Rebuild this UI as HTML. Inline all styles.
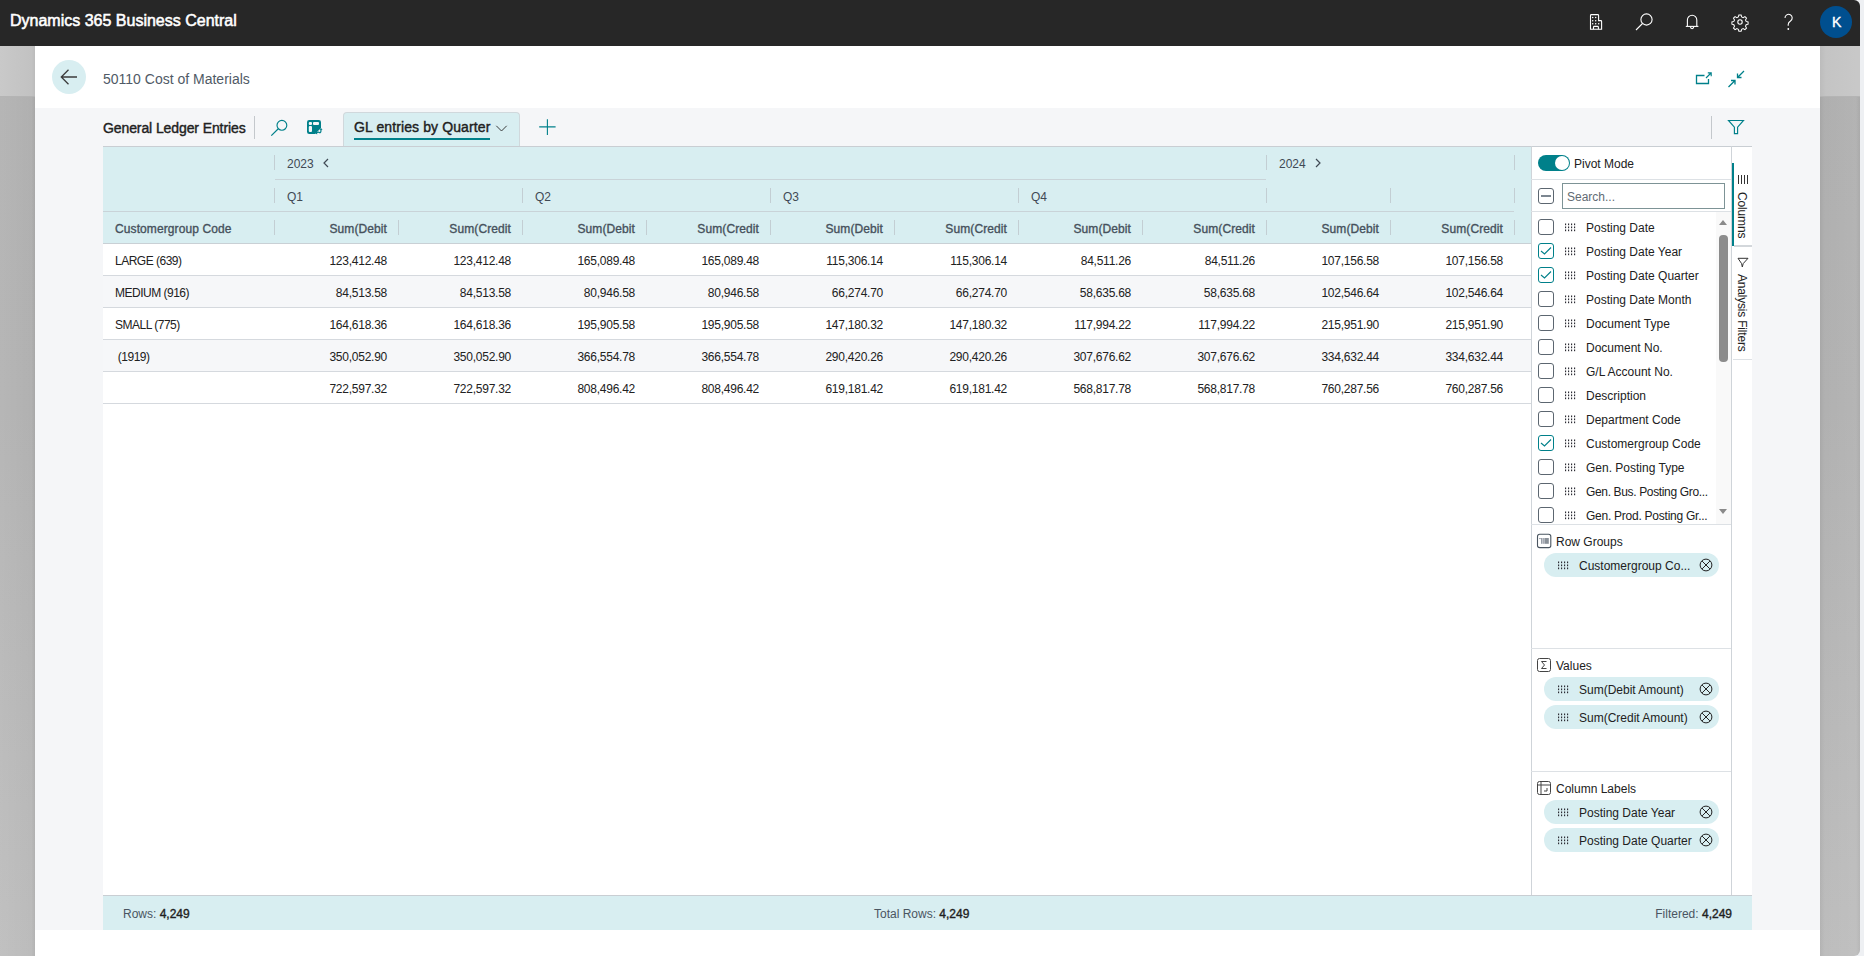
<!DOCTYPE html><html><head><meta charset='utf-8'><style>
*{box-sizing:border-box;margin:0;padding:0}
html,body{width:1864px;height:956px;overflow:hidden;background:#eef0f3;font-family:"Liberation Sans",sans-serif;color:#212121}
.a{position:absolute}
.nw{white-space:nowrap}
#top{left:0;top:0;width:1860px;height:46px;background:#272727;border-top-right-radius:6px}
#title{left:10px;top:12px;color:#fff;font-size:16px;-webkit-text-stroke:0.55px #fff;letter-spacing:0px;white-space:nowrap}
#lstrip{left:0;top:46px;width:35px;height:910px;background:linear-gradient(90deg,rgba(255,255,255,0.07),rgba(255,255,255,0) 90%,rgba(0,0,0,0.05)),linear-gradient(180deg,#b0b0b0,#b1b1b1 40%,#bcbcbc)}
#lstrip .t{position:absolute;left:0;top:0;width:35px;height:51px;background:linear-gradient(90deg,#c9c9c9,#c2c2c2 90%,#bbbbbb);border-bottom:1px solid #b4b4b4}
#rstrip{left:1820px;top:46px;width:40px;height:910px;background:linear-gradient(90deg,rgba(0,0,0,0.05),rgba(0,0,0,0) 12%,rgba(255,255,255,0.05) 90%,rgba(0,0,0,0.03)),linear-gradient(180deg,#afafaf,#b1b1b1 40%,#bdbdbd);border-bottom-right-radius:6px}
#rstrip .t{position:absolute;left:0;top:0;width:40px;height:51px;background:linear-gradient(90deg,#bcbcbc,#c4c4c4 15%,#c8c8c8 90%);border-bottom:1px solid #b4b4b4}
#page{left:35px;top:46px;width:1785px;height:910px;background:#fff}
#tb{left:35px;top:108px;width:1785px;height:822px;background:#f5f6f8}
.hd{font-size:12px;color:#46515c;-webkit-text-stroke:0.35px #46515c;letter-spacing:0.1px;white-space:nowrap}
.gt{font-size:12px;color:#3f4954;white-space:nowrap}
.cell{font-size:12px;color:#212121;white-space:nowrap;letter-spacing:-0.25px}
.lab{letter-spacing:-0.5px}
.bar{width:1px;height:15px;background:#c3ced3}
.hl{height:1px;background:#c9d3d8}
.rl{height:1px;background:#d5d9de}
.cb{width:16px;height:16px;border:1px solid #5c6670;border-radius:3px;background:#fff}
.cb.on{border-color:#00808a}
.pt{font-size:12px;color:#212121;white-space:nowrap}
.chip{height:24px;border-radius:12px;background:#d8eef1}
</style>
</head><body>
<div class='a' id='top'><div class='a' id='title'>Dynamics 365 Business Central</div></div>
<div class='a' id='lstrip'><div class='t'></div></div>
<div class='a' id='rstrip'><div class='t'></div></div>
<div class='a' id='page'></div>
<div class='a' id='tb'></div>
<svg class='a' style='left:1580px;top:6px' width='280' height='34' viewBox='1580 6 280 34'>
<g fill='none' stroke='#ffffff' stroke-width='1.1'>
<path d='M1590.5 29.2 V15.5 Q1590.5 14.6 1591.4 14.6 H1597.7 Q1598.6 14.6 1598.6 15.5 V20.6 H1600.8 Q1601.6 20.6 1601.6 21.4 V29.2 Z'/>
<path d='M1593.5 29.2 V27.3 Q1593.5 26.4 1594.4 26.4 H1597.5 Q1598.4 26.4 1598.4 27.3 V29.2'/>
<circle cx='1646.5' cy='19.5' r='5.6'/>
<path d='M1642.5 23.5 L1636 30'/>
<path d='M1687.4 26 V20 a4.7 4.7 0 0 1 9.4 0 V26'/>
<path d='M1685.8 26.4 H1698.4'/>
<path d='M1690.4 26.6 Q1690.6 28.6 1692.1 28.6 Q1693.6 28.6 1693.8 26.6'/>
<path d='M1785 18 a3.6 3.6 0 1 1 5.5 3 c-1.6 1-2.3 1.8-2.3 3.6 v1.2'/>
</g>
<g fill='#ffffff'>
<circle cx='1592.7' cy='17.5' r='0.75'/><circle cx='1595.7' cy='17.5' r='0.75'/><circle cx='1592.7' cy='20.7' r='0.75'/><circle cx='1595.7' cy='20.7' r='0.75'/><circle cx='1592.7' cy='23.7' r='0.75'/><circle cx='1595.7' cy='23.7' r='0.75'/><circle cx='1598.7' cy='23.7' r='0.75'/>
<circle cx='1788.3' cy='29' r='0.9'/>
</g>
<path fill='none' stroke='#ffffff' stroke-width='1.1' transform='translate(1740 22) scale(0.93) translate(-1740 -22)' d='M1740 14.5 l1.2 0 l0.6 2.1 l1.6 0.7 l1.9 -1.1 l1.7 1.7 l-1.1 1.9 l0.7 1.6 l2.1 0.6 v2.4 l-2.1 0.6 l-0.7 1.6 l1.1 1.9 l-1.7 1.7 l-1.9 -1.1 l-1.6 0.7 l-0.6 2.1 h-2.4 l-0.6 -2.1 l-1.6 -0.7 l-1.9 1.1 l-1.7 -1.7 l1.1 -1.9 l-0.7 -1.6 l-2.1 -0.6 v-2.4 l2.1 -0.6 l0.7 -1.6 l-1.1 -1.9 l1.7 -1.7 l1.9 1.1 l1.6 -0.7 l0.6 -2.1 Z'/>
<circle cx='1740' cy='22' r='2.2' fill='none' stroke='#ffffff' stroke-width='1.1'/>
<circle cx='1836' cy='22' r='16' fill='#004f8f'/>
</svg>
<div class='a nw' style='left:1832px;top:14px;color:#fff;font-size:14px;-webkit-text-stroke:0.4px #fff'>K</div>
<div class='a' style='left:52px;top:60px;width:34px;height:34px;border-radius:50%;background:#d8eef1'></div>
<svg class='a' style='left:52px;top:60px' width='34' height='34' viewBox='52 60 34 34'>
<path d='M77 77 H61.5 M68.5 69.8 L61.3 77 L68.5 84.2' fill='none' stroke='#3b3b3b' stroke-width='1.3'/></svg>
<div class='a nw' style='left:103px;top:71px;font-size:14px;color:#505a66'>50110 Cost of Materials</div>
<svg class='a' style='left:1690px;top:65px' width='60' height='30' viewBox='1690 65 60 30'>
<g fill='none' stroke='#00808a' stroke-width='1.3'>
<path d='M1704.5 75.5 H1696.5 V83.5 H1708.5 V79'/>
<path d='M1706 78 L1711 73 M1707.8 72.8 H1711.2 V76.2' stroke-width='1.15'/>
<path d='M1744 71 L1737.5 77.5 M1737.5 73.5 V77.5 H1741.5'/>
<path d='M1728.5 87 L1735 80.5 M1731 80.5 H1735 V84.5'/>
</g></svg>
<div class='a nw' style='left:103px;top:120px;font-size:14px;color:#212121;-webkit-text-stroke:0.4px #212121;letter-spacing:-0.1px'>General Ledger Entries</div>
<div class='a' style='left:254px;top:116px;width:1px;height:23px;background:#c4c8cc'></div>
<svg class='a' style='left:265px;top:112px' width='70' height='30' viewBox='265 112 70 30'>
<g fill='none' stroke='#00808a' stroke-width='1.3'>
<circle cx='281.9' cy='125.3' r='4.9' stroke-width='1.15'/><path d='M278.3 128.7 L271.3 135.6' stroke-width='1.2'/>
</g>
<rect x='307' y='120' width='14' height='14' rx='2.2' fill='#00808a'/>
<rect x='308.8' y='122' width='3.2' height='2.9' rx='1' fill='#f5f6f8'/>
<rect x='313' y='122' width='6' height='2.9' rx='1' fill='#f5f6f8'/>
<rect x='308.8' y='126.1' width='3.2' height='5.9' rx='1' fill='#f5f6f8'/>
<path d='M314 135 L321.5 127.5 V135 Z' fill='#f5f6f8'/>
<path d='M316.2 133.2 q2 -2 3.2 -0.6 q1.6 1 1.6 -3.2' fill='none' stroke='#00808a' stroke-width='1.2'/>
<path d='M314.8 133 L317 131.3 L317.2 134.6 Z M319.6 129.8 L321 128 L322.6 129.9 Z' fill='#00808a'/>
</svg>
<div class='a' style='left:343px;top:112px;width:177px;height:35px;background:#d8eef1;border:1px solid #d0d8dc;border-bottom:none;border-radius:4px 4px 0 0'></div>
<div class='a nw' style='left:354px;top:119px;font-size:14px;color:#212121;-webkit-text-stroke:0.4px #212121;letter-spacing:0.11px'>GL entries by Quarter</div>
<div class='a' style='left:354px;top:138px;width:136px;height:2px;background:#00808a'></div>
<svg class='a' style='left:490px;top:115px' width='80' height='30' viewBox='490 115 80 30'>
<path d='M496.3 125.8 L501.5 131 L506.7 125.8' fill='none' stroke='#333' stroke-width='0.95'/>
<path d='M547.4 119.2 V135 M539.2 126.9 H555.6' fill='none' stroke='#00808a' stroke-width='1.1'/>
</svg>
<div class='a' style='left:1711px;top:116px;width:1px;height:23px;background:#c4c8cc'></div>
<svg class='a' style='left:1720px;top:112px' width='30' height='30' viewBox='1720 112 30 30'>
<path d='M1728.5 120.5 H1743.5 L1737.6 127.2 V133.6 H1734.4 V127.2 Z' fill='none' stroke='#00808a' stroke-width='1.15' stroke-linejoin='miter'/></svg>
<div class='a' style='left:103px;top:146px;width:1649px;height:1px;background:#c9ced3'></div>
<div class='a' style='left:103px;top:147px;width:1428px;height:97px;background:#d8eef1'></div>
<div class='a hl' style='left:275px;top:179px;width:991px'></div>
<div class='a hl' style='left:103px;top:211px;width:1411px'></div>
<div class='a' style='left:103px;top:243px;width:1428px;height:1px;background:#c9d0d5'></div>
<div class='a bar' style='left:274px;top:155px'></div>
<div class='a bar' style='left:1266px;top:155px'></div>
<div class='a bar' style='left:1514px;top:155px'></div>
<div class='a bar' style='left:274px;top:188px'></div>
<div class='a bar' style='left:522px;top:188px'></div>
<div class='a bar' style='left:770px;top:188px'></div>
<div class='a bar' style='left:1018px;top:188px'></div>
<div class='a bar' style='left:1266px;top:188px'></div>
<div class='a bar' style='left:1390px;top:188px'></div>
<div class='a bar' style='left:1514px;top:188px'></div>
<div class='a bar' style='left:274px;top:220px'></div>
<div class='a bar' style='left:398px;top:220px'></div>
<div class='a bar' style='left:522px;top:220px'></div>
<div class='a bar' style='left:646px;top:220px'></div>
<div class='a bar' style='left:770px;top:220px'></div>
<div class='a bar' style='left:894px;top:220px'></div>
<div class='a bar' style='left:1018px;top:220px'></div>
<div class='a bar' style='left:1142px;top:220px'></div>
<div class='a bar' style='left:1266px;top:220px'></div>
<div class='a bar' style='left:1390px;top:220px'></div>
<div class='a bar' style='left:1514px;top:220px'></div>
<div class='a gt' style='left:287px;top:157px'>2023</div>
<svg class='a' style='left:320px;top:156px' width='12' height='14'><path d='M8 3 L4 7 L8 11' fill='none' stroke='#3f4954' stroke-width='1.2'/></svg>
<div class='a gt' style='left:1279px;top:157px'>2024</div>
<svg class='a' style='left:1312px;top:156px' width='12' height='14'><path d='M4 3 L8 7 L4 11' fill='none' stroke='#3f4954' stroke-width='1.2'/></svg>
<div class='a gt' style='left:287px;top:190px'>Q1</div>
<div class='a gt' style='left:535px;top:190px'>Q2</div>
<div class='a gt' style='left:783px;top:190px'>Q3</div>
<div class='a gt' style='left:1031px;top:190px'>Q4</div>
<div class='a hd' style='left:115px;top:222px'>Customergroup Code</div>
<div class='a hd' style='left:274px;width:113px;top:222px;text-align:right'>Sum(Debit</div>
<div class='a hd' style='left:398px;width:113px;top:222px;text-align:right'>Sum(Credit</div>
<div class='a hd' style='left:522px;width:113px;top:222px;text-align:right'>Sum(Debit</div>
<div class='a hd' style='left:646px;width:113px;top:222px;text-align:right'>Sum(Credit</div>
<div class='a hd' style='left:770px;width:113px;top:222px;text-align:right'>Sum(Debit</div>
<div class='a hd' style='left:894px;width:113px;top:222px;text-align:right'>Sum(Credit</div>
<div class='a hd' style='left:1018px;width:113px;top:222px;text-align:right'>Sum(Debit</div>
<div class='a hd' style='left:1142px;width:113px;top:222px;text-align:right'>Sum(Credit</div>
<div class='a hd' style='left:1266px;width:113px;top:222px;text-align:right'>Sum(Debit</div>
<div class='a hd' style='left:1390px;width:113px;top:222px;text-align:right'>Sum(Credit</div>
<div class='a' style='left:103px;top:244px;width:1428px;height:651px;background:#fff'></div>
<div class='a rl' style='left:103px;top:275px;width:1428px'></div>
<div class='a cell lab' style='left:115px;top:254px'>LARGE (639)</div>
<div class='a cell' style='left:274px;width:113px;top:254px;text-align:right'>123,412.48</div>
<div class='a cell' style='left:398px;width:113px;top:254px;text-align:right'>123,412.48</div>
<div class='a cell' style='left:522px;width:113px;top:254px;text-align:right'>165,089.48</div>
<div class='a cell' style='left:646px;width:113px;top:254px;text-align:right'>165,089.48</div>
<div class='a cell' style='left:770px;width:113px;top:254px;text-align:right'>115,306.14</div>
<div class='a cell' style='left:894px;width:113px;top:254px;text-align:right'>115,306.14</div>
<div class='a cell' style='left:1018px;width:113px;top:254px;text-align:right'>84,511.26</div>
<div class='a cell' style='left:1142px;width:113px;top:254px;text-align:right'>84,511.26</div>
<div class='a cell' style='left:1266px;width:113px;top:254px;text-align:right'>107,156.58</div>
<div class='a cell' style='left:1390px;width:113px;top:254px;text-align:right'>107,156.58</div>
<div class='a' style='left:103px;top:276px;width:1428px;height:31px;background:#f6f7f9'></div>
<div class='a rl' style='left:103px;top:307px;width:1428px'></div>
<div class='a cell lab' style='left:115px;top:286px'>MEDIUM (916)</div>
<div class='a cell' style='left:274px;width:113px;top:286px;text-align:right'>84,513.58</div>
<div class='a cell' style='left:398px;width:113px;top:286px;text-align:right'>84,513.58</div>
<div class='a cell' style='left:522px;width:113px;top:286px;text-align:right'>80,946.58</div>
<div class='a cell' style='left:646px;width:113px;top:286px;text-align:right'>80,946.58</div>
<div class='a cell' style='left:770px;width:113px;top:286px;text-align:right'>66,274.70</div>
<div class='a cell' style='left:894px;width:113px;top:286px;text-align:right'>66,274.70</div>
<div class='a cell' style='left:1018px;width:113px;top:286px;text-align:right'>58,635.68</div>
<div class='a cell' style='left:1142px;width:113px;top:286px;text-align:right'>58,635.68</div>
<div class='a cell' style='left:1266px;width:113px;top:286px;text-align:right'>102,546.64</div>
<div class='a cell' style='left:1390px;width:113px;top:286px;text-align:right'>102,546.64</div>
<div class='a rl' style='left:103px;top:339px;width:1428px'></div>
<div class='a cell lab' style='left:115px;top:318px'>SMALL (775)</div>
<div class='a cell' style='left:274px;width:113px;top:318px;text-align:right'>164,618.36</div>
<div class='a cell' style='left:398px;width:113px;top:318px;text-align:right'>164,618.36</div>
<div class='a cell' style='left:522px;width:113px;top:318px;text-align:right'>195,905.58</div>
<div class='a cell' style='left:646px;width:113px;top:318px;text-align:right'>195,905.58</div>
<div class='a cell' style='left:770px;width:113px;top:318px;text-align:right'>147,180.32</div>
<div class='a cell' style='left:894px;width:113px;top:318px;text-align:right'>147,180.32</div>
<div class='a cell' style='left:1018px;width:113px;top:318px;text-align:right'>117,994.22</div>
<div class='a cell' style='left:1142px;width:113px;top:318px;text-align:right'>117,994.22</div>
<div class='a cell' style='left:1266px;width:113px;top:318px;text-align:right'>215,951.90</div>
<div class='a cell' style='left:1390px;width:113px;top:318px;text-align:right'>215,951.90</div>
<div class='a' style='left:103px;top:340px;width:1428px;height:31px;background:#f6f7f9'></div>
<div class='a rl' style='left:103px;top:371px;width:1428px'></div>
<div class='a cell lab' style='left:115px;top:350px'>&nbsp;(1919)</div>
<div class='a cell' style='left:274px;width:113px;top:350px;text-align:right'>350,052.90</div>
<div class='a cell' style='left:398px;width:113px;top:350px;text-align:right'>350,052.90</div>
<div class='a cell' style='left:522px;width:113px;top:350px;text-align:right'>366,554.78</div>
<div class='a cell' style='left:646px;width:113px;top:350px;text-align:right'>366,554.78</div>
<div class='a cell' style='left:770px;width:113px;top:350px;text-align:right'>290,420.26</div>
<div class='a cell' style='left:894px;width:113px;top:350px;text-align:right'>290,420.26</div>
<div class='a cell' style='left:1018px;width:113px;top:350px;text-align:right'>307,676.62</div>
<div class='a cell' style='left:1142px;width:113px;top:350px;text-align:right'>307,676.62</div>
<div class='a cell' style='left:1266px;width:113px;top:350px;text-align:right'>334,632.44</div>
<div class='a cell' style='left:1390px;width:113px;top:350px;text-align:right'>334,632.44</div>
<div class='a rl' style='left:103px;top:403px;width:1428px'></div>
<div class='a cell lab' style='left:115px;top:382px'></div>
<div class='a cell' style='left:274px;width:113px;top:382px;text-align:right'>722,597.32</div>
<div class='a cell' style='left:398px;width:113px;top:382px;text-align:right'>722,597.32</div>
<div class='a cell' style='left:522px;width:113px;top:382px;text-align:right'>808,496.42</div>
<div class='a cell' style='left:646px;width:113px;top:382px;text-align:right'>808,496.42</div>
<div class='a cell' style='left:770px;width:113px;top:382px;text-align:right'>619,181.42</div>
<div class='a cell' style='left:894px;width:113px;top:382px;text-align:right'>619,181.42</div>
<div class='a cell' style='left:1018px;width:113px;top:382px;text-align:right'>568,817.78</div>
<div class='a cell' style='left:1142px;width:113px;top:382px;text-align:right'>568,817.78</div>
<div class='a cell' style='left:1266px;width:113px;top:382px;text-align:right'>760,287.56</div>
<div class='a cell' style='left:1390px;width:113px;top:382px;text-align:right'>760,287.56</div>
<div class='a' style='left:103px;top:895px;width:1649px;height:1px;background:#c9ced3'></div>
<div class='a' style='left:103px;top:896px;width:1649px;height:34px;background:#d8eef1'></div>
<div class='a nw' style='left:123px;top:907px;font-size:12px;color:#4a5561'>Rows: <span style='color:#212121;-webkit-text-stroke:0.35px #212121'>4,249</span></div>
<div class='a nw' style='left:874px;top:907px;font-size:12px;color:#4a5561'>Total Rows: <span style='color:#212121;-webkit-text-stroke:0.35px #212121'>4,249</span></div>
<div class='a nw' style='left:1600px;width:132px;text-align:right;top:907px;font-size:12px;color:#4a5561'>Filtered: <span style='color:#212121;-webkit-text-stroke:0.35px #212121'>4,249</span></div>
<div class='a' style='left:1531px;top:147px;width:221px;height:748px;background:#fff'></div>
<div class='a' style='left:1531px;top:146px;width:1px;height:749px;background:#cfd4d9'></div>
<div class='a' style='left:1731px;top:146px;width:1px;height:749px;background:#cfd4d9'></div>
<div class='a' style='left:1538px;top:155px;width:32px;height:16px;border-radius:8px;background:#00808a'></div>
<div class='a' style='left:1555px;top:156px;width:14px;height:14px;border-radius:50%;background:#fff'></div>
<div class='a pt' style='left:1574px;top:157px'>Pivot Mode</div>
<div class='a' style='left:1531px;top:179px;width:200px;height:1px;background:#dde1e5'></div>
<div class='a cb' style='left:1538px;top:188px'></div>
<div class='a' style='left:1541px;top:195px;width:10px;height:2px;background:#7c8690'></div>
<div class='a' style='left:1562px;top:183px;width:163px;height:26px;border:1px solid #7d9396;background:#fff'></div>
<div class='a pt' style='left:1567px;top:190px;color:#626b73'>Search...</div>
<div class='a' style='left:1531px;top:211px;width:200px;height:1px;background:#dde1e5'></div>
<div class='a cb' style='left:1538px;top:219px'></div>
<div class='a pt' style='left:1586px;top:221px;letter-spacing:0'>Posting Date</div>
<div class='a cb on' style='left:1538px;top:243px'></div>
<div class='a pt' style='left:1586px;top:245px;letter-spacing:0'>Posting Date Year</div>
<div class='a cb on' style='left:1538px;top:267px'></div>
<div class='a pt' style='left:1586px;top:269px;letter-spacing:0'>Posting Date Quarter</div>
<div class='a cb' style='left:1538px;top:291px'></div>
<div class='a pt' style='left:1586px;top:293px;letter-spacing:0'>Posting Date Month</div>
<div class='a cb' style='left:1538px;top:315px'></div>
<div class='a pt' style='left:1586px;top:317px;letter-spacing:0'>Document Type</div>
<div class='a cb' style='left:1538px;top:339px'></div>
<div class='a pt' style='left:1586px;top:341px;letter-spacing:0'>Document No.</div>
<div class='a cb' style='left:1538px;top:363px'></div>
<div class='a pt' style='left:1586px;top:365px;letter-spacing:0'>G/L Account No.</div>
<div class='a cb' style='left:1538px;top:387px'></div>
<div class='a pt' style='left:1586px;top:389px;letter-spacing:0'>Description</div>
<div class='a cb' style='left:1538px;top:411px'></div>
<div class='a pt' style='left:1586px;top:413px;letter-spacing:0'>Department Code</div>
<div class='a cb on' style='left:1538px;top:435px'></div>
<div class='a pt' style='left:1586px;top:437px;letter-spacing:0'>Customergroup Code</div>
<div class='a cb' style='left:1538px;top:459px'></div>
<div class='a pt' style='left:1586px;top:461px;letter-spacing:0'>Gen. Posting Type</div>
<div class='a cb' style='left:1538px;top:483px'></div>
<div class='a pt' style='left:1586px;top:485px;letter-spacing:-0.35px'>Gen. Bus. Posting Gro...</div>
<div class='a cb' style='left:1538px;top:507px'></div>
<div class='a pt' style='left:1586px;top:509px;letter-spacing:-0.25px'>Gen. Prod. Posting Gr...</div>
<svg class='a' style='left:1532px;top:212px' width='200' height='312' viewBox='1532 212 200 312'><g fill='#2d2d35'><rect x='1565' y='223.5' width='1.15' height='1.7'/><rect x='1565' y='226.5' width='1.15' height='1.7'/><rect x='1565' y='229.5' width='1.15' height='1.7'/><rect x='1568' y='223.5' width='1.15' height='1.7'/><rect x='1568' y='226.5' width='1.15' height='1.7'/><rect x='1568' y='229.5' width='1.15' height='1.7'/><rect x='1571' y='223.5' width='1.15' height='1.7'/><rect x='1571' y='226.5' width='1.15' height='1.7'/><rect x='1571' y='229.5' width='1.15' height='1.7'/><rect x='1574' y='223.5' width='1.15' height='1.7'/><rect x='1574' y='226.5' width='1.15' height='1.7'/><rect x='1574' y='229.5' width='1.15' height='1.7'/><rect x='1565' y='247.5' width='1.15' height='1.7'/><rect x='1565' y='250.5' width='1.15' height='1.7'/><rect x='1565' y='253.5' width='1.15' height='1.7'/><rect x='1568' y='247.5' width='1.15' height='1.7'/><rect x='1568' y='250.5' width='1.15' height='1.7'/><rect x='1568' y='253.5' width='1.15' height='1.7'/><rect x='1571' y='247.5' width='1.15' height='1.7'/><rect x='1571' y='250.5' width='1.15' height='1.7'/><rect x='1571' y='253.5' width='1.15' height='1.7'/><rect x='1574' y='247.5' width='1.15' height='1.7'/><rect x='1574' y='250.5' width='1.15' height='1.7'/><rect x='1574' y='253.5' width='1.15' height='1.7'/><rect x='1565' y='271.5' width='1.15' height='1.7'/><rect x='1565' y='274.5' width='1.15' height='1.7'/><rect x='1565' y='277.5' width='1.15' height='1.7'/><rect x='1568' y='271.5' width='1.15' height='1.7'/><rect x='1568' y='274.5' width='1.15' height='1.7'/><rect x='1568' y='277.5' width='1.15' height='1.7'/><rect x='1571' y='271.5' width='1.15' height='1.7'/><rect x='1571' y='274.5' width='1.15' height='1.7'/><rect x='1571' y='277.5' width='1.15' height='1.7'/><rect x='1574' y='271.5' width='1.15' height='1.7'/><rect x='1574' y='274.5' width='1.15' height='1.7'/><rect x='1574' y='277.5' width='1.15' height='1.7'/><rect x='1565' y='295.5' width='1.15' height='1.7'/><rect x='1565' y='298.5' width='1.15' height='1.7'/><rect x='1565' y='301.5' width='1.15' height='1.7'/><rect x='1568' y='295.5' width='1.15' height='1.7'/><rect x='1568' y='298.5' width='1.15' height='1.7'/><rect x='1568' y='301.5' width='1.15' height='1.7'/><rect x='1571' y='295.5' width='1.15' height='1.7'/><rect x='1571' y='298.5' width='1.15' height='1.7'/><rect x='1571' y='301.5' width='1.15' height='1.7'/><rect x='1574' y='295.5' width='1.15' height='1.7'/><rect x='1574' y='298.5' width='1.15' height='1.7'/><rect x='1574' y='301.5' width='1.15' height='1.7'/><rect x='1565' y='319.5' width='1.15' height='1.7'/><rect x='1565' y='322.5' width='1.15' height='1.7'/><rect x='1565' y='325.5' width='1.15' height='1.7'/><rect x='1568' y='319.5' width='1.15' height='1.7'/><rect x='1568' y='322.5' width='1.15' height='1.7'/><rect x='1568' y='325.5' width='1.15' height='1.7'/><rect x='1571' y='319.5' width='1.15' height='1.7'/><rect x='1571' y='322.5' width='1.15' height='1.7'/><rect x='1571' y='325.5' width='1.15' height='1.7'/><rect x='1574' y='319.5' width='1.15' height='1.7'/><rect x='1574' y='322.5' width='1.15' height='1.7'/><rect x='1574' y='325.5' width='1.15' height='1.7'/><rect x='1565' y='343.5' width='1.15' height='1.7'/><rect x='1565' y='346.5' width='1.15' height='1.7'/><rect x='1565' y='349.5' width='1.15' height='1.7'/><rect x='1568' y='343.5' width='1.15' height='1.7'/><rect x='1568' y='346.5' width='1.15' height='1.7'/><rect x='1568' y='349.5' width='1.15' height='1.7'/><rect x='1571' y='343.5' width='1.15' height='1.7'/><rect x='1571' y='346.5' width='1.15' height='1.7'/><rect x='1571' y='349.5' width='1.15' height='1.7'/><rect x='1574' y='343.5' width='1.15' height='1.7'/><rect x='1574' y='346.5' width='1.15' height='1.7'/><rect x='1574' y='349.5' width='1.15' height='1.7'/><rect x='1565' y='367.5' width='1.15' height='1.7'/><rect x='1565' y='370.5' width='1.15' height='1.7'/><rect x='1565' y='373.5' width='1.15' height='1.7'/><rect x='1568' y='367.5' width='1.15' height='1.7'/><rect x='1568' y='370.5' width='1.15' height='1.7'/><rect x='1568' y='373.5' width='1.15' height='1.7'/><rect x='1571' y='367.5' width='1.15' height='1.7'/><rect x='1571' y='370.5' width='1.15' height='1.7'/><rect x='1571' y='373.5' width='1.15' height='1.7'/><rect x='1574' y='367.5' width='1.15' height='1.7'/><rect x='1574' y='370.5' width='1.15' height='1.7'/><rect x='1574' y='373.5' width='1.15' height='1.7'/><rect x='1565' y='391.5' width='1.15' height='1.7'/><rect x='1565' y='394.5' width='1.15' height='1.7'/><rect x='1565' y='397.5' width='1.15' height='1.7'/><rect x='1568' y='391.5' width='1.15' height='1.7'/><rect x='1568' y='394.5' width='1.15' height='1.7'/><rect x='1568' y='397.5' width='1.15' height='1.7'/><rect x='1571' y='391.5' width='1.15' height='1.7'/><rect x='1571' y='394.5' width='1.15' height='1.7'/><rect x='1571' y='397.5' width='1.15' height='1.7'/><rect x='1574' y='391.5' width='1.15' height='1.7'/><rect x='1574' y='394.5' width='1.15' height='1.7'/><rect x='1574' y='397.5' width='1.15' height='1.7'/><rect x='1565' y='415.5' width='1.15' height='1.7'/><rect x='1565' y='418.5' width='1.15' height='1.7'/><rect x='1565' y='421.5' width='1.15' height='1.7'/><rect x='1568' y='415.5' width='1.15' height='1.7'/><rect x='1568' y='418.5' width='1.15' height='1.7'/><rect x='1568' y='421.5' width='1.15' height='1.7'/><rect x='1571' y='415.5' width='1.15' height='1.7'/><rect x='1571' y='418.5' width='1.15' height='1.7'/><rect x='1571' y='421.5' width='1.15' height='1.7'/><rect x='1574' y='415.5' width='1.15' height='1.7'/><rect x='1574' y='418.5' width='1.15' height='1.7'/><rect x='1574' y='421.5' width='1.15' height='1.7'/><rect x='1565' y='439.5' width='1.15' height='1.7'/><rect x='1565' y='442.5' width='1.15' height='1.7'/><rect x='1565' y='445.5' width='1.15' height='1.7'/><rect x='1568' y='439.5' width='1.15' height='1.7'/><rect x='1568' y='442.5' width='1.15' height='1.7'/><rect x='1568' y='445.5' width='1.15' height='1.7'/><rect x='1571' y='439.5' width='1.15' height='1.7'/><rect x='1571' y='442.5' width='1.15' height='1.7'/><rect x='1571' y='445.5' width='1.15' height='1.7'/><rect x='1574' y='439.5' width='1.15' height='1.7'/><rect x='1574' y='442.5' width='1.15' height='1.7'/><rect x='1574' y='445.5' width='1.15' height='1.7'/><rect x='1565' y='463.5' width='1.15' height='1.7'/><rect x='1565' y='466.5' width='1.15' height='1.7'/><rect x='1565' y='469.5' width='1.15' height='1.7'/><rect x='1568' y='463.5' width='1.15' height='1.7'/><rect x='1568' y='466.5' width='1.15' height='1.7'/><rect x='1568' y='469.5' width='1.15' height='1.7'/><rect x='1571' y='463.5' width='1.15' height='1.7'/><rect x='1571' y='466.5' width='1.15' height='1.7'/><rect x='1571' y='469.5' width='1.15' height='1.7'/><rect x='1574' y='463.5' width='1.15' height='1.7'/><rect x='1574' y='466.5' width='1.15' height='1.7'/><rect x='1574' y='469.5' width='1.15' height='1.7'/><rect x='1565' y='487.5' width='1.15' height='1.7'/><rect x='1565' y='490.5' width='1.15' height='1.7'/><rect x='1565' y='493.5' width='1.15' height='1.7'/><rect x='1568' y='487.5' width='1.15' height='1.7'/><rect x='1568' y='490.5' width='1.15' height='1.7'/><rect x='1568' y='493.5' width='1.15' height='1.7'/><rect x='1571' y='487.5' width='1.15' height='1.7'/><rect x='1571' y='490.5' width='1.15' height='1.7'/><rect x='1571' y='493.5' width='1.15' height='1.7'/><rect x='1574' y='487.5' width='1.15' height='1.7'/><rect x='1574' y='490.5' width='1.15' height='1.7'/><rect x='1574' y='493.5' width='1.15' height='1.7'/><rect x='1565' y='511.5' width='1.15' height='1.7'/><rect x='1565' y='514.5' width='1.15' height='1.7'/><rect x='1565' y='517.5' width='1.15' height='1.7'/><rect x='1568' y='511.5' width='1.15' height='1.7'/><rect x='1568' y='514.5' width='1.15' height='1.7'/><rect x='1568' y='517.5' width='1.15' height='1.7'/><rect x='1571' y='511.5' width='1.15' height='1.7'/><rect x='1571' y='514.5' width='1.15' height='1.7'/><rect x='1571' y='517.5' width='1.15' height='1.7'/><rect x='1574' y='511.5' width='1.15' height='1.7'/><rect x='1574' y='514.5' width='1.15' height='1.7'/><rect x='1574' y='517.5' width='1.15' height='1.7'/></g><path d='M1541 251 L1544.5 254 L1551 247.5' fill='none' stroke='#00808a' stroke-width='1.1'/><path d='M1541 275 L1544.5 278 L1551 271.5' fill='none' stroke='#00808a' stroke-width='1.1'/><path d='M1541 443 L1544.5 446 L1551 439.5' fill='none' stroke='#00808a' stroke-width='1.1'/></svg>
<div class='a' style='left:1716px;top:212px;width:15px;height:312px;background:#f9f9f9'></div>
<svg class='a' style='left:1716px;top:212px' width='15' height='312'><path d='M3 13 L7 8 L11 13 Z M3 297 L7 302 L11 297 Z' fill='#8a8a8a'/></svg>
<div class='a' style='left:1719px;top:235px;width:9px;height:127px;border-radius:4px;background:#8c8c8c'></div>
<div class='a' style='left:1531px;top:524px;width:200px;height:1px;background:#dde1e5'></div>
<div class='a pt' style='left:1556px;top:535px'>Row Groups</div>
<svg class='a' style='left:1536px;top:533px' width='16' height='16'><rect x='1.5' y='1.3' width='13.3' height='13.3' rx='2.2' fill='none' stroke='#4a5560' stroke-width='1.1'/><rect x='3.4' y='5' width='1.1' height='1.1' fill='#6a7280'/><rect x='5.3' y='5' width='1.1' height='5.8' fill='#6a7280'/><rect x='7.4' y='5' width='1.1' height='5.8' fill='#6a7280'/><rect x='9' y='5' width='3.8' height='5.8' fill='#8a9199'/></svg>
<div class='a chip' style='left:1544px;top:553px;width:175px'></div>
<svg class='a' style='left:1557px;top:553px' width='20' height='24'><g fill='#2d2d35'><rect x='1' y='8.5' width='1.15' height='1.7'/><rect x='1' y='11.5' width='1.15' height='1.7'/><rect x='1' y='14.5' width='1.15' height='1.7'/><rect x='4' y='8.5' width='1.15' height='1.7'/><rect x='4' y='11.5' width='1.15' height='1.7'/><rect x='4' y='14.5' width='1.15' height='1.7'/><rect x='7' y='8.5' width='1.15' height='1.7'/><rect x='7' y='11.5' width='1.15' height='1.7'/><rect x='7' y='14.5' width='1.15' height='1.7'/><rect x='10' y='8.5' width='1.15' height='1.7'/><rect x='10' y='11.5' width='1.15' height='1.7'/><rect x='10' y='14.5' width='1.15' height='1.7'/></g></svg>
<div class='a pt' style='left:1579px;top:559px'>Customergroup Co...</div>
<svg class='a' style='left:1698px;top:557px' width='16' height='16'><circle cx='8' cy='8' r='5.9' fill='none' stroke='#222' stroke-width='1'/><path d='M4.1 4.1 L11.9 11.9 M11.9 4.1 L4.1 11.9' stroke='#222' stroke-width='1'/></svg>
<div class='a' style='left:1531px;top:648px;width:200px;height:1px;background:#dde1e5'></div>
<div class='a pt' style='left:1556px;top:659px'>Values</div>
<svg class='a' style='left:1536px;top:657px' width='16' height='16'><rect x='1.5' y='1.5' width='13' height='13' rx='2' fill='none' stroke='#444' stroke-width='1'/><path d='M10.5 4.5 H5.5 L8.5 8 L5.5 11.5 H10.5' fill='none' stroke='#444' stroke-width='1'/></svg>
<div class='a chip' style='left:1544px;top:677px;width:175px'></div>
<svg class='a' style='left:1557px;top:677px' width='20' height='24'><g fill='#2d2d35'><rect x='1' y='8.5' width='1.15' height='1.7'/><rect x='1' y='11.5' width='1.15' height='1.7'/><rect x='1' y='14.5' width='1.15' height='1.7'/><rect x='4' y='8.5' width='1.15' height='1.7'/><rect x='4' y='11.5' width='1.15' height='1.7'/><rect x='4' y='14.5' width='1.15' height='1.7'/><rect x='7' y='8.5' width='1.15' height='1.7'/><rect x='7' y='11.5' width='1.15' height='1.7'/><rect x='7' y='14.5' width='1.15' height='1.7'/><rect x='10' y='8.5' width='1.15' height='1.7'/><rect x='10' y='11.5' width='1.15' height='1.7'/><rect x='10' y='14.5' width='1.15' height='1.7'/></g></svg>
<div class='a pt' style='left:1579px;top:683px'>Sum(Debit Amount)</div>
<svg class='a' style='left:1698px;top:681px' width='16' height='16'><circle cx='8' cy='8' r='5.9' fill='none' stroke='#222' stroke-width='1'/><path d='M4.1 4.1 L11.9 11.9 M11.9 4.1 L4.1 11.9' stroke='#222' stroke-width='1'/></svg>
<div class='a chip' style='left:1544px;top:705px;width:175px'></div>
<svg class='a' style='left:1557px;top:705px' width='20' height='24'><g fill='#2d2d35'><rect x='1' y='8.5' width='1.15' height='1.7'/><rect x='1' y='11.5' width='1.15' height='1.7'/><rect x='1' y='14.5' width='1.15' height='1.7'/><rect x='4' y='8.5' width='1.15' height='1.7'/><rect x='4' y='11.5' width='1.15' height='1.7'/><rect x='4' y='14.5' width='1.15' height='1.7'/><rect x='7' y='8.5' width='1.15' height='1.7'/><rect x='7' y='11.5' width='1.15' height='1.7'/><rect x='7' y='14.5' width='1.15' height='1.7'/><rect x='10' y='8.5' width='1.15' height='1.7'/><rect x='10' y='11.5' width='1.15' height='1.7'/><rect x='10' y='14.5' width='1.15' height='1.7'/></g></svg>
<div class='a pt' style='left:1579px;top:711px'>Sum(Credit Amount)</div>
<svg class='a' style='left:1698px;top:709px' width='16' height='16'><circle cx='8' cy='8' r='5.9' fill='none' stroke='#222' stroke-width='1'/><path d='M4.1 4.1 L11.9 11.9 M11.9 4.1 L4.1 11.9' stroke='#222' stroke-width='1'/></svg>
<div class='a' style='left:1531px;top:771px;width:200px;height:1px;background:#dde1e5'></div>
<div class='a pt' style='left:1556px;top:782px'>Column Labels</div>
<svg class='a' style='left:1536px;top:780px' width='16' height='16'><rect x='1.5' y='1.5' width='13' height='13' rx='2' fill='none' stroke='#444' stroke-width='1'/><path d='M1.5 5 H14.5 M5 1.5 V14.5 M11 8 V11 H8' fill='none' stroke='#444' stroke-width='1'/></svg>
<div class='a chip' style='left:1544px;top:800px;width:175px'></div>
<svg class='a' style='left:1557px;top:800px' width='20' height='24'><g fill='#2d2d35'><rect x='1' y='8.5' width='1.15' height='1.7'/><rect x='1' y='11.5' width='1.15' height='1.7'/><rect x='1' y='14.5' width='1.15' height='1.7'/><rect x='4' y='8.5' width='1.15' height='1.7'/><rect x='4' y='11.5' width='1.15' height='1.7'/><rect x='4' y='14.5' width='1.15' height='1.7'/><rect x='7' y='8.5' width='1.15' height='1.7'/><rect x='7' y='11.5' width='1.15' height='1.7'/><rect x='7' y='14.5' width='1.15' height='1.7'/><rect x='10' y='8.5' width='1.15' height='1.7'/><rect x='10' y='11.5' width='1.15' height='1.7'/><rect x='10' y='14.5' width='1.15' height='1.7'/></g></svg>
<div class='a pt' style='left:1579px;top:806px'>Posting Date Year</div>
<svg class='a' style='left:1698px;top:804px' width='16' height='16'><circle cx='8' cy='8' r='5.9' fill='none' stroke='#222' stroke-width='1'/><path d='M4.1 4.1 L11.9 11.9 M11.9 4.1 L4.1 11.9' stroke='#222' stroke-width='1'/></svg>
<div class='a chip' style='left:1544px;top:828px;width:175px'></div>
<svg class='a' style='left:1557px;top:828px' width='20' height='24'><g fill='#2d2d35'><rect x='1' y='8.5' width='1.15' height='1.7'/><rect x='1' y='11.5' width='1.15' height='1.7'/><rect x='1' y='14.5' width='1.15' height='1.7'/><rect x='4' y='8.5' width='1.15' height='1.7'/><rect x='4' y='11.5' width='1.15' height='1.7'/><rect x='4' y='14.5' width='1.15' height='1.7'/><rect x='7' y='8.5' width='1.15' height='1.7'/><rect x='7' y='11.5' width='1.15' height='1.7'/><rect x='7' y='14.5' width='1.15' height='1.7'/><rect x='10' y='8.5' width='1.15' height='1.7'/><rect x='10' y='11.5' width='1.15' height='1.7'/><rect x='10' y='14.5' width='1.15' height='1.7'/></g></svg>
<div class='a pt' style='left:1579px;top:834px'>Posting Date Quarter</div>
<svg class='a' style='left:1698px;top:832px' width='16' height='16'><circle cx='8' cy='8' r='5.9' fill='none' stroke='#222' stroke-width='1'/><path d='M4.1 4.1 L11.9 11.9 M11.9 4.1 L4.1 11.9' stroke='#222' stroke-width='1'/></svg>
<div class='a' style='left:1732px;top:163px;width:2px;height:83px;background:#00808a'></div>
<div class='a' style='left:1734px;top:245px;width:18px;height:2px;background:#d3d7db'></div>
<div class='a' style='left:1733px;top:359px;width:19px;height:1px;background:#dde1e5'></div>
<svg class='a' style='left:1735px;top:172px' width='16' height='16'><path d='M3.5 3 V12 M6.5 3 V12 M9.5 3 V12 M12.5 3 V12' stroke='#333' stroke-width='1'/></svg>
<div class='a pt' style='left:1737px;top:192px;letter-spacing:-0.15px;transform-origin:0 0;transform:translate(12px,0) rotate(90deg)'>Columns</div>
<svg class='a' style='left:1735px;top:255px' width='16' height='16'><path d='M3 3.3 H13 L8.2 8.6 L7.3 12 L6.6 8.6 Z' fill='none' stroke='#333' stroke-width='1' stroke-linejoin='round'/></svg>
<div class='a pt' style='left:1737px;top:274px;letter-spacing:-0.2px;transform-origin:0 0;transform:translate(12px,0) rotate(90deg)'>Analysis Filters</div>
</body></html>
